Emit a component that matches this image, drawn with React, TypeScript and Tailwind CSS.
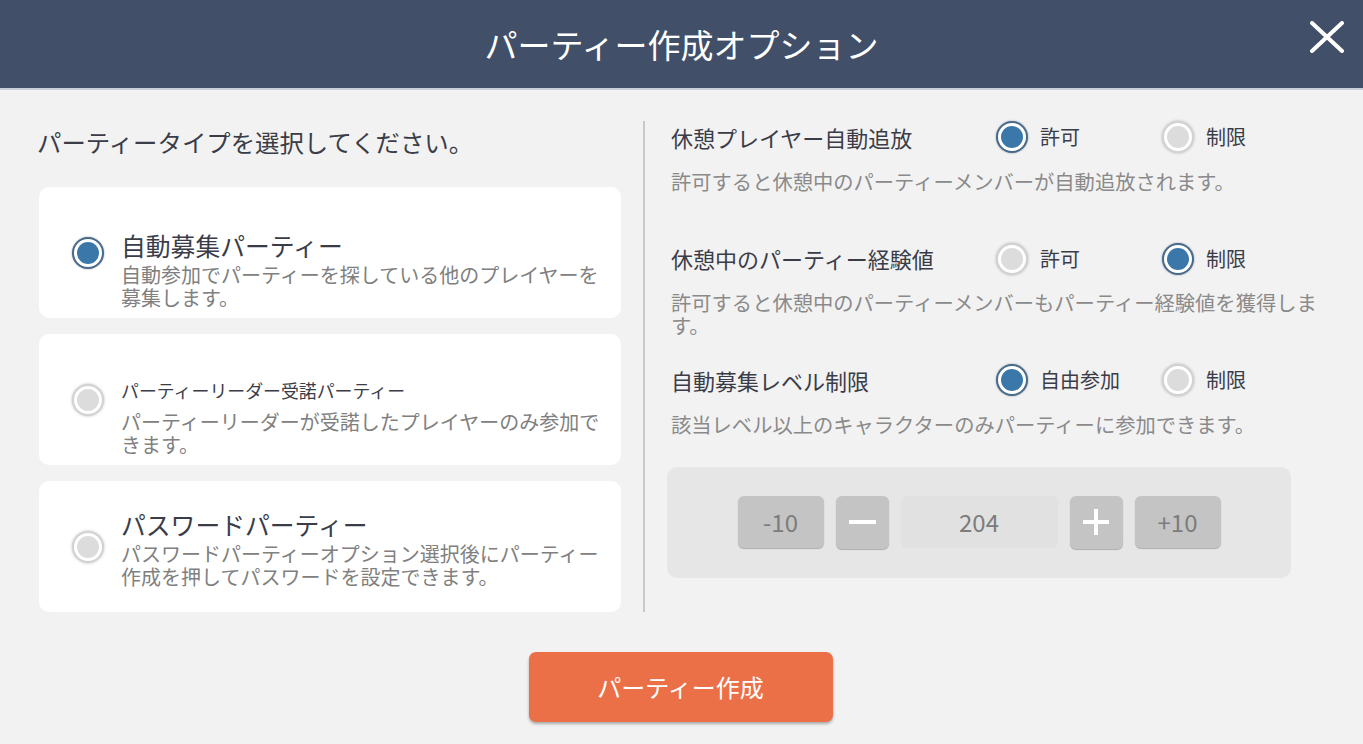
import React, { useState } from "react";

const font = { fontFamily: '"Noto Sans CJK JP", "Noto Sans", sans-serif' };

function Radio({ on }: { on: boolean }) {
  return on ? (
    <div className="w-8 h-8 shrink-0 rounded-full border-2 border-[#4a6a8a] bg-white p-[3px] shadow-[0_0_2px_rgba(40,70,100,0.5)]">
      <div className="w-full h-full rounded-full bg-[#3b78a9]" />
    </div>
  ) : (
    <div className="w-8 h-8 shrink-0 rounded-full border-2 border-[#d2d2d2] bg-white p-[3px] shadow-[0_0_3px_rgba(0,0,0,0.25)]">
      <div className="w-full h-full rounded-full bg-[#dcdcdc]" />
    </div>
  );
}

const partyTypes = [
  {
    title: "自動募集パーティー",
    titleClass: "text-[24.8px] leading-[30px] mb-[3px]",
    desc: "自動参加でパーティーを探している他のプレイヤーを募集します。",
    pad: "pt-[33px]",
  },
  {
    title: "パーティーリーダー受諾パーティー",
    titleClass: "text-[17.9px] leading-[26px] mb-[6.5px]",
    desc: "パーティーリーダーが受諾したプレイヤーのみ参加できます。",
    pad: "pt-[33.5px]",
  },
  {
    title: "パスワードパーティー",
    titleClass: "text-[24.8px] leading-[30px] mb-[3px]",
    desc: "パスワードパーティーオプション選択後にパーティー作成を押してパスワードを設定できます。",
    pad: "pt-[4px]",
  },
];

const options = [
  {
    label: "休憩プレイヤー自動追放",
    choices: ["許可", "制限"],
    desc: "許可すると休憩中のパーティーメンバーが自動追放されます。",
    mt: "mt-0",
  },
  {
    label: "休憩中のパーティー経験値",
    choices: ["許可", "制限"],
    desc: "許可すると休憩中のパーティーメンバーもパーティー経験値を獲得します。",
    mt: "mt-[50px]",
  },
  {
    label: "自動募集レベル制限",
    choices: ["自由参加", "制限"],
    desc: "該当レベル以上のキャラクターのみパーティーに参加できます。",
    mt: "mt-[27px]",
  },
];

export default function App() {
  const [partyType, setPartyType] = useState(0);
  const [selected, setSelected] = useState([0, 1, 0]);
  const [level, setLevel] = useState(204);

  return (
    <div className="w-[1363px] h-[744px] bg-[#f2f2f2] flex flex-col overflow-hidden" style={font}>
      {/* Header */}
      <div className="h-[90px] shrink-0 bg-[#414f68] border-b-2 border-[#c8cfd9] flex items-center justify-center relative">
        <h1 className="text-white text-[33px] leading-none">パーティー作成オプション</h1>
        <button className="absolute right-[16px] top-[19px] w-[40px] h-[36px] flex items-center justify-center">
          <svg width="36" height="32" viewBox="0 0 36 32">
            <path d="M3 2 L33 30 M33 2 L3 30" stroke="white" strokeWidth="4" strokeLinecap="round" />
          </svg>
        </button>
      </div>

      {/* Body */}
      <div className="flex pt-[31px] pl-[37px]">
        {/* Left */}
        <div className="w-[584px] shrink-0 flex flex-col">
          <p className="mt-[5px] text-[24.4px] leading-[32px] text-[#3a3d48]">
            パーティータイプを選択してください。
          </p>
          <div className="mt-[29px] ml-[2px] flex flex-col gap-[16px]">
            {partyTypes.map((p, i) => (
              <div
                key={i}
                onClick={() => setPartyType(i)}
                className="h-[131px] w-[582px] bg-white rounded-[10px] flex items-center pl-[33px] pr-[20px] cursor-pointer"
              >
                <Radio on={partyType === i} />
                <div className={`ml-[17px] ${p.pad}`}>
                  <div className={`${p.titleClass} text-[#3a3d48]`}>{p.title}</div>
                  <div className="text-[20px] leading-[23px] text-[#808080] w-[490px]">{p.desc}</div>
                </div>
              </div>
            ))}
          </div>
        </div>

        {/* Divider */}
        <div className="ml-[22px] w-[2px] shrink-0 self-stretch bg-[#c9c9c9]" />

        {/* Right */}
        <div className="ml-[26px] w-[660px] shrink-0">
          {options.map((o, i) => (
            <div key={i} className={o.mt}>
              <div className="flex items-center h-[32px]">
                <div className="w-[325px] shrink-0 text-[22px] text-[#3a3d48]">{o.label}</div>
                {o.choices.map((c, j) => (
                  <div
                    key={j}
                    onClick={() => setSelected(selected.map((v, k) => (k === i ? j : v)))}
                    className="w-[166px] shrink-0 flex items-center gap-[12px] cursor-pointer"
                  >
                    <Radio on={selected[i] === j} />
                    <span className="text-[20px] text-[#3a3d48]">{c}</span>
                  </div>
                ))}
              </div>
              <p className="mt-[16.5px] text-[20.3px] leading-[23px] text-[#8a8a8a]">{o.desc}</p>
            </div>
          ))}

          {/* Level stepper */}
          <div className="mt-[31px] -ml-[4px] w-[624px] h-[111px] bg-[#e6e6e6] rounded-[10px] flex items-center justify-center gap-[12px]">
            <button
              onClick={() => setLevel(level - 10)}
              className="w-[86px] h-[52px] rounded-[6px] bg-[#c4c4c4] text-[#7c7c7c] text-[24px] shadow-[0_1px_1px_rgba(0,0,0,0.25)]"
            >
              -10
            </button>
            <button
              onClick={() => setLevel(level - 1)}
              className="w-[53px] h-[53px] rounded-[6px] bg-[#c4c4c4] flex items-center justify-center shadow-[0_1px_1px_rgba(0,0,0,0.25)]"
            >
              <div className="w-[27px] h-[4px] bg-white" />
            </button>
            <div className="w-[157px] h-[52px] rounded-[6px] bg-[#e1e1e1] text-[#7c7c7c] text-[24px] flex items-center justify-center">
              {level}
            </div>
            <button
              onClick={() => setLevel(level + 1)}
              className="w-[53px] h-[53px] rounded-[6px] bg-[#c4c4c4] flex items-center justify-center shadow-[0_1px_1px_rgba(0,0,0,0.25)]"
            >
              <svg width="28" height="28" viewBox="0 0 28 28">
                <path d="M14 1 V27 M1 14 H27" stroke="white" strokeWidth="4" />
              </svg>
            </button>
            <button
              onClick={() => setLevel(level + 10)}
              className="w-[86px] h-[52px] rounded-[6px] bg-[#c4c4c4] text-[#7c7c7c] text-[24px] shadow-[0_1px_1px_rgba(0,0,0,0.25)]"
            >
              +10
            </button>
          </div>
        </div>
      </div>

      {/* Create button */}
      <div className="flex justify-center mt-[40px] pr-[2px]">
        <button className="w-[304px] h-[70px] rounded-[7px] bg-[#ec7047] text-white text-[24px] shadow-[0_2px_3px_rgba(0,0,0,0.3)]">
          パーティー作成
        </button>
      </div>
    </div>
  );
}
